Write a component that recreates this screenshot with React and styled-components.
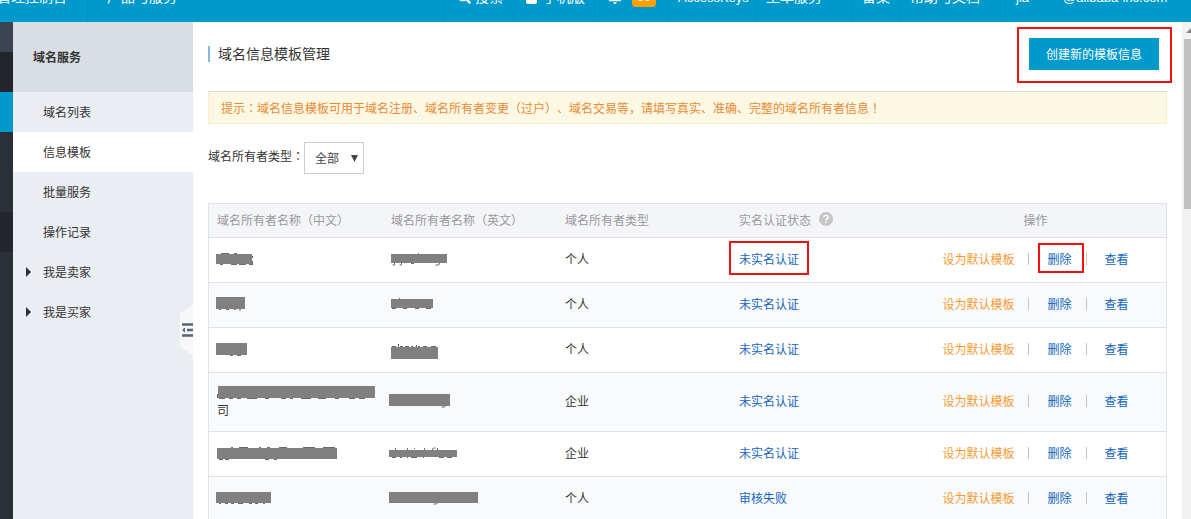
import React from "react";
import styled, { createGlobalStyle } from "styled-components";
import { FaSearch, FaBell } from "react-icons/fa";

const GlobalStyle = createGlobalStyle`
  * { box-sizing: border-box; }
  body {
    margin: 0;
    background: #fff;
    color: #333;
    font: 12px/18px "Liberation Sans", "Noto Sans CJK SC", sans-serif;
    text-spacing-trim: space-all;
  }
  a { text-decoration: none; }
`;

const Page = styled.div`
  display: flex;
  flex-direction: column;
  height: 100vh;
  overflow: hidden;
`;

const TopBar = styled.header`
  display: flex;
  align-items: flex-end;
  flex: none;
  height: 22px;
  overflow: hidden;
  background: #0099cc;
`;

const TopGroup = styled.nav`
  display: flex;
  align-items: flex-end;
  flex: none;
  margin-left: ${(p) => (p.$end ? "auto" : "-4px")};
`;

const TopItem = styled.a`
  display: flex;
  align-items: center;
  flex: none;
  gap: ${(p) => p.$gap || 4}px;
  width: ${(p) => p.$width}px;
  height: 50px;
  padding-top: ${(p) => (p.$latin ? 2 : 0)}px;
  padding-left: ${(p) => p.$pad ?? 10}px;
  border-left: 1px solid #0090c2;
  color: #fff;
  font-size: ${(p) => (p.$latin ? 13 : 14)}px;
  white-space: nowrap;
`;

const Badge = styled.span`
  width: 24px;
  height: 20px;
  margin-left: 6px;
  border-radius: 4px;
  background: #ff9f00;
  font-size: 12px;
  font-weight: bold;
  line-height: 20px;
  text-align: center;
`;

const Body = styled.div`
  display: flex;
  flex: 1;
  min-height: 0;
`;

const Rail = styled.div`
  display: flex;
  flex-direction: column;
  flex: none;
  width: 13px;
  background: #293038;
`;

const RailCell = styled.div`
  height: ${(p) => p.$height}px;
  background: ${(p) => p.$color};
`;

const Sidebar = styled.aside`
  position: relative;
  flex: none;
  width: 180px;
  background: #eaedf1;
`;

const SidebarTitle = styled.h2`
  margin: 0;
  padding: 2px 0 0 20px;
  background: #d9dde4;
  font-size: 12px;
  line-height: 68px;
`;

const MenuItem = styled.a`
  display: flex;
  align-items: center;
  height: 40px;
  padding: 2px 0 0 13px;
  background: ${(p) => (p.$active ? "#fff" : "transparent")};
  color: #333;
`;

const MenuMark = styled.span`
  display: flex;
  width: 17px;
  padding-bottom: 2px;
`;

const Collapse = styled.button`
  position: absolute;
  top: 282px;
  right: 0;
  display: flex;
  padding: 0;
  border: 0;
  background: none;
`;

const Main = styled.main`
  flex: 1;
  min-width: 0;
  padding: 0 15px;
  overflow: hidden;
`;

const PageHead = styled.div`
  display: flex;
  align-items: center;
  justify-content: space-between;
  height: 69px;
  padding: 0 8px 5px 0;
`;

const Title = styled.h1`
  margin: 0;
  padding-left: 8px;
  border-left: 2px solid #88b7e0;
  font-size: 14px;
  font-weight: normal;
  line-height: 16px;
`;

const Highlight = styled.span`
  position: relative;
  display: inline-block;
  &::after {
    content: "";
    position: absolute;
    inset: ${(p) => p.$inset};
    border: 2px solid #ee1111;
    pointer-events: none;
  }
`;

const PrimaryButton = styled.button`
  display: block;
  width: 130px;
  height: 32px;
  padding: 2px 0 0;
  border: 0;
  background: #0099cc;
  color: #fff;
  font: inherit;
`;

const Notice = styled.p`
  margin: 0;
  padding: 8px 12px 5px;
  border: 1px solid #fbeccb;
  border-top-color: #d9d9d3;
  background: #fcf8e3;
  color: #ea8a35;
`;

const CenteredMark = styled.span`
  font-family: "Noto Sans CJK JP", sans-serif;
  line-height: 1;
`;

const Filter = styled.div`
  display: flex;
  align-items: center;
  margin: 18px 0 29px;
`;

const FilterLabel = styled.label`
  padding-bottom: 2px;
`;

const SelectBox = styled.span`
  position: relative;
  display: flex;
  svg {
    position: absolute;
    top: 13px;
    right: 6px;
    pointer-events: none;
  }
`;

const Select = styled.select`
  appearance: none;
  width: 60px;
  height: 32px;
  padding: 2px 10px 0;
  border: 1px solid #ccc;
  border-radius: 0;
  background: #fff;
  color: #444;
  font: inherit;
`;

const Table = styled.table`
  width: 100%;
  border: 1px solid #dfe3e9;
  border-spacing: 0;
  table-layout: fixed;
`;

const HeadCell = styled.th`
  width: ${(p) => (p.$last ? "auto" : "174px")};
  height: 34px;
  padding: 0 8px;
  border-bottom: 1px solid #dfe3e9;
  background: #f4f5f9;
  color: #999;
  font-weight: normal;
  text-align: ${(p) => (p.$last ? "center" : "left")};
`;

const HeadLabel = styled.span`
  display: flex;
  align-items: flex-start;
  gap: 8px;
`;

const Row = styled.tr`
  background: #fff;
  &:nth-child(even) { background: #f8fafc; }
`;

const Cell = styled.td`
  height: 45px;
  padding: 11px 8px;
  border-bottom: 1px solid #dfe3e9;
`;

const Link = styled.a`
  color: ${(p) => (p.$warm ? "#f79a33" : "#1464bd")};
`;

const Actions = styled.div`
  display: flex;
  align-items: center;
  justify-content: center;
`;

const Separator = styled.span`
  width: 1px;
  height: 12px;
  margin: 0 18px 2px 14px;
  background: #c4c4c4;
`;

const MaskSvg = styled.svg`
  display: block;
  overflow: visible;
`;

const ScrollTrack = styled.div`
  flex: none;
  width: 9px;
  padding-left: 2px;
  overflow: hidden;
  background: #f1f1f1;
  svg { display: block; }
`;

const ScrollThumb = styled.div`
  height: 170px;
  background: #c1c1c1;
`;

function Mask({ x = 0, y, w, h, ink }) {
  return (
    <MaskSvg width={w} height="18" aria-label="已隐藏" role="img">
      <path d={ink} fill="none" stroke="#6a6a6a" strokeWidth="1" />
      <rect x={x} y={y} width={w} height={h} fill="#808080" />
    </MaskSvg>
  );
}

const rows = [
  {
    name: { x: -1, y: 3, w: 36, h: 10, ink: "M4 2.5h8M17 2.5h3M3 13.5h3M14 13.5h6M22 13.5h7M35.5 5v2M35.5 10v3M32 13.5h4" },
    en: { y: 3, w: 56, h: 9, ink: "M3.5 11v3h-2M10.5 11v3h-2M27.5 2v2M20 12.5h3M48.5 11v2l-1 1h-3" },
    type: "个人", status: "未实名认证", marked: true,
  },
  {
    name: { x: -1, y: 1, w: 29, h: 12, ink: "M2 13.5h2M9 13.5h3M17 13.5h2M22 14h2" },
    en: { y: 3, w: 42, h: 9, ink: "M1 12.5h4M8 2.5h1M12 12.5h4M24 12.5h4M35 12.5h5" },
    type: "个人", status: "未实名认证",
  },
  {
    name: { x: -1, y: 2, w: 31, h: 12, ink: "M13 14.5h3M20 14.5h4" },
    en: { y: 6, w: 47, h: 12, ink: "M1 5.5h4M7.5 3v3M9 5.5h3M14 5.5h4M20 5.5h2M25.5 4v2M27 5.5h2M32 5.5h4M40 5.5h5" },
    type: "个人", status: "未实名认证",
  },
  {
    name: { x: 1, y: 2, w: 157, h: 12, ink: "M2 14.5h6M12 14.5h4M20 14.5h4M30 14.5h10M48 14.5h4M64 14.5h5M73 14.5h3M84 14.5h10M101 14.5h8M118 14.5h4M132 14.5h6M142 14.5h6M.5 10v4" },
    rest: "司",
    en: { x: -2, y: 1, w: 61, h: 12, ink: "M54.5 12v1l-1 1h-3" },
    type: "企业", status: "未实名认证",
  },
  {
    name: { y: 3, w: 120, h: 11, ink: "M14 2.5h2M22 2.5h9M42 2.5h2M50 2.5h3M62 2.5h8M86 2.5h12M106 2.5h12M2 14.5h4M8 14.5h4M48 14.5h4M57 14.5h3" },
    en: { x: -2, y: 5, w: 68, h: 7, ink: "M4.5 3v3M16.5 3v3M23.5 3v1M33.5 3v3M41.5 6v-2l1-1h2M46.5 3v3M1 12.5h4M9 12.5h2M16 12.5h1M20 12.5h6M32 12.5h1M48 12.5h5M56 12.5h5" },
    type: "企业", status: "未实名认证",
  },
  {
    name: { x: -1, y: 2, w: 55, h: 11, ink: "M2 13.5h2M8 13.5h3M14 13.5h3M21 13.5h5M32 13.5h3M38 13.5h3M46 13.5h2" },
    en: { x: -2, y: 2, w: 89, h: 11, ink: "M46.5 12v1l-1 1h-3" },
    type: "个人", status: "审核失败",
  },
];

const menu = [
  { label: "域名列表" },
  { label: "信息模板", active: true },
  { label: "批量服务" },
  { label: "操作记录" },
  { label: "我是卖家", group: true },
  { label: "我是买家", group: true },
];

export default function App() {
  return (
    <Page lang="zh-CN">
      <GlobalStyle />
      <TopBar>
        <TopGroup>
          <TopItem href="#" $width={91} $pad={0}>管理控制台</TopItem>
          <TopItem href="#" $width={110} $pad={19}>产品与服务</TopItem>
        </TopGroup>
        <TopGroup $end>
          <TopItem href="#" $width={69} $pad={12}>
            <FaSearch size={14} />
            搜索
          </TopItem>
          <TopItem href="#" $width={81} $pad={12} $gap={6}>
            <svg width="11" height="14" viewBox="0 0 11 14">
              <rect width="11" height="14" rx="2" fill="#fff" />
              <rect x="2" y="2" width="7" height="7" fill="#0099cc" />
            </svg>
            手机版
          </TopItem>
          <TopItem href="#" $width={73} $pad={13}>
            <FaBell size={14} />
            <Badge>66</Badge>
          </TopItem>
          <TopItem href="#" $width={88} $latin>AccessKeys</TopItem>
          <TopItem href="#" $width={96}>工单服务</TopItem>
          <TopItem href="#" $width={48}>备案</TopItem>
          <TopItem href="#" $width={106}>帮助与文档</TopItem>
          <TopItem href="#" $width={186} $gap={34} $latin>
            <span>jia</span>
            <span>@alibaba-inc.com</span>
          </TopItem>
        </TopGroup>
      </TopBar>
      <Body>
        <Rail>
          <RailCell $height={30} $color="#3b4353" />
          <RailCell $height={40} $color="#22262c" />
          <RailCell $height={40} $color="#0099cc" />
          <RailCell $height={80} $color="#293038" />
          <RailCell $height={40} $color="#22262c" />
        </Rail>
        <Sidebar>
          <SidebarTitle>域名服务</SidebarTitle>
          <nav>
            {menu.map((m) => (
              <MenuItem href="#" key={m.label} $active={m.active}>
                <MenuMark>
                  {m.group && (
                    <svg width="5" height="10" viewBox="0 0 5 10">
                      <path d="M0 0L5 5L0 10Z" fill="#2a2f3a" />
                    </svg>
                  )}
                </MenuMark>
                {m.label}
              </MenuItem>
            ))}
          </nav>
          <Collapse aria-label="收起菜单">
            <svg width="13" height="52" viewBox="0 0 13 52">
              <path d="M13 0L1 9Q0 10 0 11V41Q0 42 1 43L13 52Z" fill="#f7f7f7" />
              <path d="M2 20.5H13M7 26H13M2 31.5H13" stroke="#546478" strokeWidth="2.4" />
              <path d="M2 26L5 23.5V28.5Z" fill="#546478" />
            </svg>
          </Collapse>
        </Sidebar>
        <Main>
          <PageHead>
            <Title>域名信息模板管理</Title>
            <Highlight $inset="-11px -13px -13px -12px">
              <PrimaryButton>创建新的模板信息</PrimaryButton>
            </Highlight>
          </PageHead>
          <Notice>
            提示<CenteredMark lang="ja">：</CenteredMark>域名信息模板可用于域名注册、域名所有者变更（过户）、域名交易等，请填写真实、准确、完整的域名所有者信息<CenteredMark lang="ja">！</CenteredMark>
          </Notice>
          <Filter>
            <FilterLabel htmlFor="owner-type">
              域名所有者类型<CenteredMark lang="ja">：</CenteredMark>
            </FilterLabel>
            <SelectBox>
              <Select id="owner-type">
                <option>全部</option>
              </Select>
              <svg width="7" height="7" viewBox="0 0 7 7">
                <path d="M0 0H7L3.5 7Z" fill="#444" />
              </svg>
            </SelectBox>
          </Filter>
          <Table>
            <thead>
              <tr>
                <HeadCell>域名所有者名称（中文）</HeadCell>
                <HeadCell>域名所有者名称（英文）</HeadCell>
                <HeadCell>域名所有者类型</HeadCell>
                <HeadCell>
                  <HeadLabel>
                    实名认证状态
                    <svg width="14" height="14" viewBox="0 0 14 14">
                      <circle cx="7" cy="7" r="7" fill="#c6c6c6" />
                      <path d="M4.8 5.4Q4.9 3.4 7 3.4Q9.2 3.4 9.2 5.2Q9.2 6.3 8 6.9Q7 7.4 7 8.5M7 9.8V11.2" fill="none" stroke="#fff" strokeWidth="1.4" />
                    </svg>
                  </HeadLabel>
                </HeadCell>
                <HeadCell $last>操作</HeadCell>
              </tr>
            </thead>
            <tbody>
              {rows.map((r, i) => (
                <Row key={i}>
                  <Cell><Mask {...r.name} />{r.rest}</Cell>
                  <Cell><Mask {...r.en} /></Cell>
                  <Cell>{r.type}</Cell>
                  <Cell>
                    {r.marked ? (
                      <Highlight $inset="-10px -10px -6px -10px">
                        <Link href="#">{r.status}</Link>
                      </Highlight>
                    ) : (
                      <Link href="#">{r.status}</Link>
                    )}
                  </Cell>
                  <Cell>
                    <Actions>
                      <Link href="#" $warm>设为默认模板</Link>
                      <Separator />
                      {r.marked ? (
                        <Highlight $inset="-8px -12px -4px -9px">
                          <Link href="#">删除</Link>
                        </Highlight>
                      ) : (
                        <Link href="#">删除</Link>
                      )}
                      <Separator />
                      <Link href="#">查看</Link>
                    </Actions>
                  </Cell>
                </Row>
              ))}
            </tbody>
          </Table>
        </Main>
        <ScrollTrack>
          <svg width="13" height="17" viewBox="0 0 13 17">
            <path d="M2 11L7 6L12 11Z" fill="#888" />
          </svg>
          <ScrollThumb />
        </ScrollTrack>
      </Body>
    </Page>
  );
}
